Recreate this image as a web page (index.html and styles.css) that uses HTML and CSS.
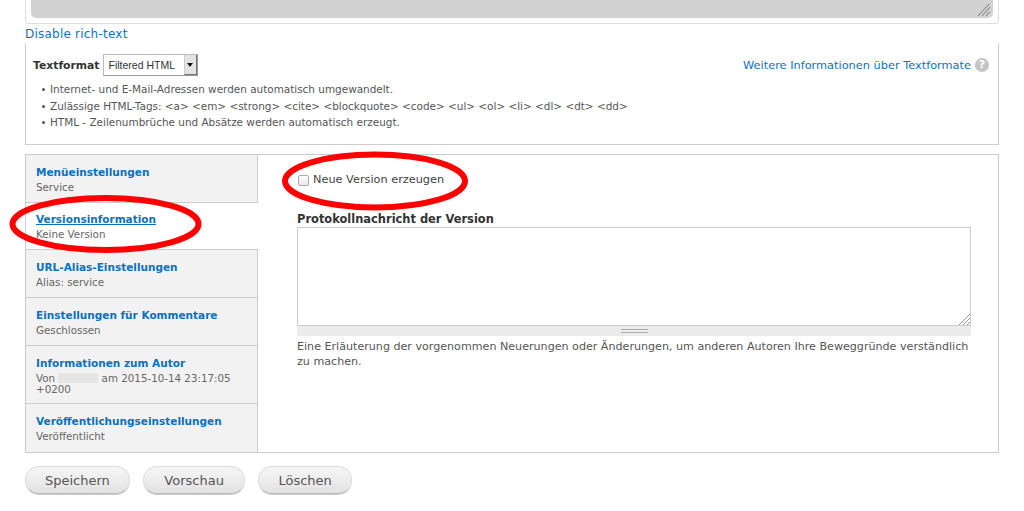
FILE: index.html
```html
<!DOCTYPE html>
<html lang="de">
<head>
<meta charset="utf-8">
<title>Versionsinformation</title>
<link rel="stylesheet" href="styles.css">
</head>
<body>
<div class="page">
  <div class="editor">
    <div class="editor-inner">
      <svg class="grip" width="14" height="14" viewBox="0 0 14 14"><path d="M1 13 12 1M5 13 13 4M9 13 13 8.500" stroke="#777" stroke-width="1" fill="none"/></svg>
    </div>
  </div>
  <a class="toggle" href="#">Disable rich-text</a>
  <div class="filter">
    <div class="filter-head">
      <div class="filter-select">
        <span class="filter-label">Textformat</span>
        <span class="select"><span class="select-text">Filtered HTML</span><span class="select-arrow"><i></i></span></span>
      </div>
      <div class="filter-help">
        <a href="#">Weitere Informationen über Textformate</a>
        <span class="help-icon">?</span>
      </div>
    </div>
    <ul class="tips">
      <li>Internet- und E-Mail-Adressen werden automatisch umgewandelt.</li>
      <li>Zulässige HTML-Tags: &lt;a&gt; &lt;em&gt; &lt;strong&gt; &lt;cite&gt; &lt;blockquote&gt; &lt;code&gt; &lt;ul&gt; &lt;ol&gt; &lt;li&gt; &lt;dl&gt; &lt;dt&gt; &lt;dd&gt;</li>
      <li>HTML - Zeilenumbrüche und Absätze werden automatisch erzeugt.</li>
    </ul>
  </div>
  <div class="tabs">
    <ul class="tab-list">
      <li class="tab"><a href="#">Menüeinstellungen</a><span>Service</span></li>
      <li class="tab active"><a href="#">Versionsinformation</a><span>Keine Version</span></li>
      <li class="tab"><a href="#">URL-Alias-Einstellungen</a><span>Alias: service</span></li>
      <li class="tab"><a href="#">Einstellungen für Kommentare</a><span>Geschlossen</span></li>
      <li class="tab"><a href="#">Informationen zum Autor</a><span>Von <b class="blur"></b> am 2015-10-14 23:17:05 +0200</span></li>
      <li class="tab"><a href="#">Veröffentlichungseinstellungen</a><span>Veröffentlicht</span></li>
    </ul>
    <div class="pane">
      <label class="check"><span class="box"></span>Neue Version erzeugen</label>
      <h4 class="log-title">Protokollnachricht der Version</h4>
      <div class="textarea">
        <svg class="corner" width="12" height="12" viewBox="0 0 12 12"><path d="M1 12 12 1M5 12 12 5M9 12 12 9" stroke="#999" fill="none"/></svg>
      </div>
      <div class="resize"><i></i></div>
      <p class="desc">Eine Erläuterung der vorgenommen Neuerungen oder Änderungen, um anderen Autoren Ihre Beweggründe verständlich zu machen.</p>
    </div>
  </div>
  <div class="actions">
    <button class="btn">Speichern</button>
    <button class="btn btn-wide">Vorschau</button>
    <button class="btn">Löschen</button>
  </div>
</div>
<svg class="marks" width="1024" height="511" viewBox="0 0 1024 511">
  <ellipse cx="105.500" cy="224" rx="93" ry="26" />
  <ellipse cx="375" cy="181" rx="90" ry="26.500" />
</svg>
</body>
</html>
```
FILE: styles.css
```css
* { box-sizing: border-box; }
html, body { margin: 0; padding: 0; background: #fff; }
body { font-family: "DejaVu Sans", sans-serif; font-size: 11px; color: #555; height: 511px; overflow: hidden; position: relative; }
a { color: #0b74c4; text-decoration: none; }
.page { padding: 0 25px; display: flex; flex-direction: column; }

.editor { height: 24px; border: 1px solid #ddd; border-top: 0; border-radius: 0 0 4px 4px; padding: 0 5px 5px; }
.editor-inner { height: 18px; background: #d2d2d2; border-radius: 0 0 5px 5px; position: relative; }
.grip { position: absolute; right: 2px; bottom: 1px; }

.toggle { font-size: 12px; line-height: 14px; height: 19px; padding-top: 3px; display: block; letter-spacing: .22px; }

.filter { height: 102px; border: 1px solid #ccc; border-top: 0; padding: 11px 8px 0 7px; }
.filter-head { display: flex; justify-content: space-between; align-items: center; height: 22px; }
.filter-select { display: flex; align-items: center; gap: 3px; }
.filter-label { font-weight: bold; font-size: 10.800px; color: #333; }
.select { display: flex; width: 95px; height: 22px; border: 1px solid #bbb; border-right-color: #999; border-bottom-color: #999; background: #fff; font-family: "Liberation Sans", sans-serif; font-size: 10.500px; color: #333; align-items: center; justify-content: space-between; padding-left: 5px; }
.select-arrow { width: 13px; height: 20px; background: #e4e4e4; border-left: 1px solid #ccc; border-right: 1px solid #777; border-bottom: 1px solid #777; display: flex; align-items: center; justify-content: center; }
.select-arrow i { border: 3px solid transparent; border-top: 4px solid #111; border-bottom: 0; }
.filter-help { display: flex; align-items: center; gap: 4px; padding-right: 1px; font-size: 11.350px; }
.help-icon { width: 14px; height: 14px; border-radius: 50%; background: #c4c4c4; color: #fff; font-weight: bold; font-size: 11px; line-height: 14px; text-align: center; }
.tips { list-style: none; margin: 5px 0 0; padding: 0 0 0 8px; font-size: 10.450px; line-height: 16.500px; color: #555; }
.tips li { position: relative; padding-left: 9px; }
.tips li::before { content: ""; position: absolute; left: 1px; top: 7px; width: 3px; height: 3px; border-radius: 50%; background: #555; }

.tabs { margin-top: 9px; height: 299px; border: 1px solid #ccc; display: flex; }
.tab-list { list-style: none; margin: 0; padding: 0; width: 232px; flex: none; display: flex; flex-direction: column; background: #fff; }
.tab { height: 48px; background: #f2f2f2; border-bottom: 1px solid #ccc; border-right: 1px solid #ccc; padding: 10px 10px 0; }
.tab:last-child { border-bottom: 0; flex: 1; }
.tab:nth-child(5) { height: 58px; }
.tab a { display: block; font-weight: bold; font-size: 10.500px; line-height: 15px; color: #0b70bd; }
.tab span { display: block; font-size: 10.300px; line-height: 11px; margin-top: 2px; color: #666; }
.tab.active { background: #fff; border-right: 0; height: 47px; padding-top: 9px; }
.tab.active a { text-decoration: underline; }
.blur { display: inline-block; width: 40px; height: 10px; background: #e6e6e6; vertical-align: -1px; }

.pane { flex: 1; min-width: 0; padding: 18px 27px 0 39px; display: flex; flex-direction: column; }
.check { display: flex; align-items: center; gap: 4px; margin-left: 1px; font-size: 11.300px; line-height: 14px; color: #444; height: 14px; }
.box { width: 11px; height: 11px; border: 1px solid #aaa; border-radius: 2px; background: linear-gradient(#fff, #e8e8e8); }
.log-title { margin: 25px 0 0; font-size: 11.450px; line-height: 14px; font-weight: bold; color: #333; }
.textarea { margin-top: 1px; height: 99px; border: 1px solid #ccc; position: relative; background: #fff; }
.corner { position: absolute; right: 0; bottom: 0; }
.resize { height: 10px; background: #ececec; display: flex; justify-content: center; align-items: center; }
.resize i { width: 27px; height: 4px; border-top: 1px solid #aaa; border-bottom: 1px solid #aaa; }
.desc { margin: 3px 0 0; font-size: 11.120px; line-height: 15px; color: #555; }

.actions { margin-top: 13px; display: flex; gap: 13px; }
.btn { height: 28px; padding: 0 19px; border: 1px solid #ddd; border-bottom-color: #bbb; border-radius: 14px; background: linear-gradient(#f6f6f6, #e2e2e2); font-family: "DejaVu Sans", sans-serif; font-size: 13px; color: #555; box-shadow: 0 1px 0 #ccc; }
.btn-wide { padding: 0 20.500px; }

.marks { position: absolute; left: 0; top: 0; pointer-events: none; }
.marks ellipse { fill: none; stroke: #f00; stroke-width: 6px; }
```
